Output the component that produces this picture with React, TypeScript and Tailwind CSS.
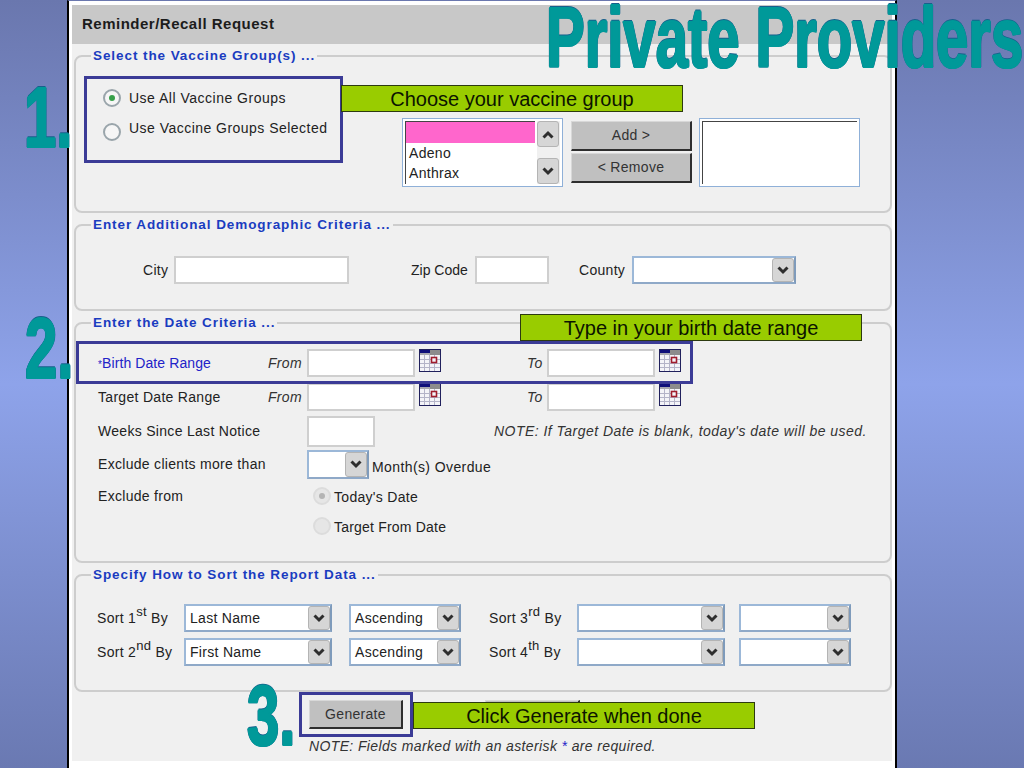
import type { ReactNode } from 'react';

const FONT = "font-['Liberation_Sans',Arial,sans-serif]";

function CalendarIcon() {
  return (
    <svg width="22" height="23" viewBox="0 0 22 23" className="shrink-0">
      <rect x="0.5" y="0.5" width="21" height="22" fill="#f4f4f8" stroke="#20205c" />
      <rect x="1" y="1" width="10" height="3" fill="#10107a" />
      <rect x="11" y="1" width="10" height="5" fill="#8c8c8c" />
      <rect x="1" y="4" width="10" height="2" fill="#a8a8b0" />
      <path d="M1 10.5h20M1 14.5h20M1 18.5h20M5.5 6v16M10.5 6v16M15.5 6v16" stroke="#b4b4c8" strokeWidth="1" />
      <rect x="12.5" y="8.5" width="5" height="5" fill="#f4f4f8" stroke="#a01c2c" strokeWidth="1.6" />
    </svg>
  );
}

function Chevron({ up }: { up?: boolean }) {
  return (
    <svg width="12" height="9" viewBox="0 0 12 9">
      <path d={up ? 'M1.5 7.5 L6 3 L10.5 7.5' : 'M1.5 1.5 L6 6 L10.5 1.5'} fill="none" stroke="#2e2e2e" strokeWidth="3" />
    </svg>
  );
}

function ArrowButton({ up, className }: { up?: boolean; className: string }) {
  return (
    <div className={`flex items-center justify-center rounded-[3px] border border-[#b4b4b4] bg-[#d6d6d6] ${className}`}>
      <Chevron up={up} />
    </div>
  );
}

function Select({ width, height = 'h-[28px]', value }: { width: string; height?: string; value?: string }) {
  return (
    <div className={`flex shrink-0 items-center justify-between border-2 border-t-[#9cb8d8] border-l-[#9cb8d8] border-r-[#7f9bbb] border-b-[#8fa9c8] bg-white ${width} ${height}`}>
      <span className="pl-[4px] text-[14px] text-[#222]">{value}</span>
      <ArrowButton className="h-full w-[22px]" />
    </div>
  );
}

function TextBox({ width, height }: { width: string; height: string }) {
  return <div className={`shrink-0 border-2 border-[#cfcfcf] bg-white ${width} ${height}`} />;
}

function Radio({ checked, disabled }: { checked?: boolean; disabled?: boolean }) {
  const ring = disabled ? 'border-[#dcdcdc] bg-[#e6e6e6]' : 'border-[#9aa5ab] bg-[#f6f6f6]';
  const dot = disabled ? 'bg-[#b4b4b4]' : 'bg-[#37a04a]';
  return (
    <div className={`flex h-[18px] w-[18px] shrink-0 items-center justify-center rounded-full border-2 ${ring}`}>
      {checked && <div className={`h-[6px] w-[6px] rounded-full ${dot}`} />}
    </div>
  );
}

function GrayButton({ children, className }: { children?: ReactNode; className: string }) {
  return (
    <div className={`flex items-center justify-center border-t border-l border-t-[#d8d8d8] border-l-[#d8d8d8] border-r-2 border-b-2 border-r-[#2e2e2e] border-b-[#2e2e2e] bg-[#c0c0c0] text-[14px] text-[#333] ${className}`}>
      {children}
    </div>
  );
}

function Group({ title, height, children }: { title: string; height: string; children: ReactNode }) {
  return (
    <fieldset className={`rounded-lg border-2 border-[#cdcdcd] ${height}`}>
      <legend className="ml-[15px] px-[2px] text-[13.5px] leading-[16px] font-bold tracking-[0.92px] text-[#1a3cc0]">
        {title}
      </legend>
      {children}
    </fieldset>
  );
}

function DateRow({ label, star }: { label: string; star?: boolean }) {
  return (
    <div className="flex h-[28px] items-center">
      <span className={`w-[170px] text-[14px] ${star ? 'mt-[1px] tracking-[0.1px] text-[#2222c8]' : 'text-[#222]'}`}>
        {star && <span className="text-[10px]">*</span>}
        {label}
      </span>
      <span className="w-[39px] text-[14px] text-[#333] italic">From</span>
      <TextBox width="w-[108px]" height="h-[28px]" />
      <div className="-mt-[6px] ml-[4px] w-[108px]">
        <CalendarIcon />
      </div>
      <span className="w-[20px] text-[14px] text-[#333] italic">To</span>
      <TextBox width="w-[108px]" height="h-[28px]" />
      <div className="-mt-[6px] ml-[4px]">
        <CalendarIcon />
      </div>
    </div>
  );
}

function SortRow({ a, b, first, second }: { a: ReactNode; b: ReactNode; first: string; second: string }) {
  return (
    <div className="flex items-center [&_sup]:text-[13px]">
      <span className="w-[87px] text-[14px] text-[#222]">{a}</span>
      <Select width="w-[148px]" value={first} />
      <div className="w-[17px]" />
      <Select width="w-[112px]" value={second} />
      <span className="ml-[28px] w-[88px] text-[14px] text-[#222]">{b}</span>
      <Select width="w-[148px]" />
      <div className="w-[14px]" />
      <Select width="w-[112px]" />
    </div>
  );
}

function Callout({ className, children }: { className: string; children: string }) {
  return (
    <div className={`absolute flex h-[27px] w-[342px] items-center justify-center border border-[#2c3a10] bg-[#99cc00] text-[20px] tracking-normal text-[#0c1400] ${className}`}>
      {children}
    </div>
  );
}

const tealText =
  'absolute origin-top scale-y-[1.46] font-bold leading-[46px] tracking-normal text-[#009999] [-webkit-text-stroke:1.5px_#009999] [text-shadow:1px_0_#17608c,-1px_0_#17608c,0_1px_#17608c,0_-1px_#17608c]';

export default function App() {
  return (
    <div className={`relative flex h-[768px] w-[1024px] overflow-hidden bg-linear-to-b from-[#6a77ae] via-[#8ea3ea] via-50% to-[#6a79b2] tracking-[0.3px] ${FONT}`}>
      <div className="ml-[67px] flex h-full w-[830px] flex-col border-x-2 border-t border-x-black border-t-[#6a77ae] bg-white pt-[4px] pr-[3px] pb-[7px] pl-[3px]">
        <div className="flex flex-1 flex-col bg-[#f0f0f0]">
          <div className="flex h-[39px] shrink-0 items-center bg-[#c8c8c8] pl-[10px] text-[15px] font-bold tracking-[0.5px] text-[#1c1c1c]">
            Reminder/Recall Request
          </div>

          <div className="flex flex-col gap-[4px] pt-[4px] pl-[2px]">
            <Group title="Select the Vaccine Group(s) ..." height="h-[165px]">
              <div className="flex">
                <div className="w-[326px] pt-[25px] pl-[27px]">
                  <div className="flex h-[18px] items-center gap-[8px]">
                    <Radio checked />
                    <span className="text-[14px] tracking-[0.5px] text-[#222]">Use All Vaccine Groups</span>
                  </div>
                  <div className="mt-[16px] flex h-[18px] items-start gap-[8px]">
                    <Radio />
                    <span className="-mt-[5px] text-[14px] tracking-[0.47px] text-[#222]">Use Vaccine Groups Selected</span>
                  </div>
                </div>
                <div className="mt-[54px] flex">
                  <div className="relative flex h-[69px] w-[161px] border border-[#8fb0d8] bg-white p-[2px]">
                    <div className="flex-1 border-t border-l border-[#444]">
                      <div className="h-[21px] bg-[#ff66cc]" />
                      <div className="pl-[3px] text-[14px] leading-[20px] text-[#222]">
                        <div>Adeno</div>
                        <div>Anthrax</div>
                      </div>
                    </div>
                    <div className="ml-[2px] flex w-[23px] flex-col justify-between bg-[#f0f0f0]">
                      <ArrowButton up className="h-[26px] w-[22px]" />
                      <ArrowButton className="h-[26px] w-[22px]" />
                    </div>
                  </div>
                  <div className="ml-[8px] flex flex-col gap-[2px] pt-[3px]">
                    <GrayButton className="h-[30px] w-[121px]">Add &gt;</GrayButton>
                    <GrayButton className="h-[30px] w-[121px]">&lt; Remove</GrayButton>
                  </div>
                  <div className="ml-[7px] h-[69px] w-[161px] border border-[#8fb0d8] bg-white p-[2px]">
                    <div className="h-full border-t border-l border-[#444]" />
                  </div>
                </div>
              </div>
            </Group>

            <Group title="Enter Additional Demographic Criteria ..." height="h-[94px]">
              <div className="mt-[23px] flex items-center text-[14px] text-[#222]">
                <span className="ml-[67px] w-[31px]">City</span>
                <TextBox width="w-[175px]" height="h-[28px]" />
                <span className="ml-[62px] w-[64px] tracking-normal">Zip Code</span>
                <TextBox width="w-[74px]" height="h-[28px]" />
                <span className="ml-[30px] w-[53px]">County</span>
                <Select width="w-[164px]" />
              </div>
            </Group>

            <Group title="Enter the Date Criteria ..." height="h-[248px]">
              <div className="mt-[18px] flex flex-col gap-[6px] pl-[22px]">
                <DateRow label="Birth Date Range" star />
                <DateRow label="Target Date Range" />
                <div className="-mt-[1px] flex items-center text-[14px] text-[#222]">
                  <span className="w-[209px]">Weeks Since Last Notice</span>
                  <TextBox width="w-[68px]" height="h-[31px]" />
                  <span className="ml-[119px] tracking-[0.47px] text-[#333] italic">
                    NOTE: If Target Date is blank, today's date will be used.
                  </span>
                </div>
                <div className="-mt-[3px] flex items-center text-[14px] text-[#222]">
                  <span className="w-[209px]">Exclude clients more than</span>
                  <Select width="w-[62px]" height="h-[29px]" />
                  <span className="mt-[6px] ml-[3px] tracking-[0.4px]">Month(s) Overdue</span>
                </div>
                <div className="-mt-[2px] flex items-start text-[14px] text-[#222]">
                  <span className="mt-[3px] w-[215px]">Exclude from</span>
                  <div className="flex flex-col gap-[12px] pt-[4px]">
                    <div className="flex h-[18px] items-center gap-[3px]">
                      <Radio checked disabled />
                      <span className="mt-[3px]">Today's Date</span>
                    </div>
                    <div className="flex h-[18px] items-center gap-[3px]">
                      <Radio disabled />
                      <span className="mt-[3px] tracking-[0.2px]">Target From Date</span>
                    </div>
                  </div>
                </div>
              </div>
            </Group>

            <Group title="Specify How to Sort the Report Data ..." height="h-[125px]">
              <div className="mt-[21px] flex flex-col gap-[6px] pl-[21px]">
                <SortRow a={<>Sort 1<sup>st</sup> By</>} b={<>Sort 3<sup>rd</sup> By</>} first="Last Name" second="Ascending" />
                <SortRow a={<>Sort 2<sup>nd</sup> By</>} b={<>Sort 4<sup>th</sup> By</>} first="First Name" second="Ascending" />
              </div>
            </Group>
          </div>

          <div className="pt-[8px] pl-[237px]">
            <div className="flex gap-[82px]">
              <GrayButton className="h-[29px] w-[94px]">Generate</GrayButton>
              <GrayButton className="h-[29px] w-[95px]" />
            </div>
            <div className="mt-[7px] text-[14px] tracking-[0.37px] text-[#333] italic">
              NOTE: Fields marked with an asterisk <span className="text-[#2222c8]">*</span> are required.
            </div>
          </div>
        </div>
      </div>

      {/* slide annotations drawn over the form */}
      <div className="absolute top-[76px] left-[84px] h-[87px] w-[259px] border-[3px] border-[#3b3b96]" />
      <div className="absolute top-[341px] left-[76px] h-[43px] w-[617px] border-[3px] border-[#3b3b96]" />
      <div className="absolute top-[692px] left-[299px] h-[45px] w-[114px] border-[3px] border-[#3b3b96]" />

      <Callout className="top-[85px] left-[341px]">Choose your vaccine group</Callout>
      <Callout className="top-[314px] left-[520px]">Type in your birth date range</Callout>
      <Callout className="top-[702px] left-[413px]">Click Generate when done</Callout>

      <div className={`${tealText} top-[4px] left-[546px] text-[58px] whitespace-nowrap`}>Private Providers</div>
      <div className={`${tealText} top-[84px] left-[24px] text-[58px]`}>1.</div>
      <div className={`${tealText} top-[315px] left-[25px] text-[58px]`}>2.</div>
      <div className={`${tealText} top-[682px] left-[247px] text-[58px]`}>3.</div>
    </div>
  );
}
